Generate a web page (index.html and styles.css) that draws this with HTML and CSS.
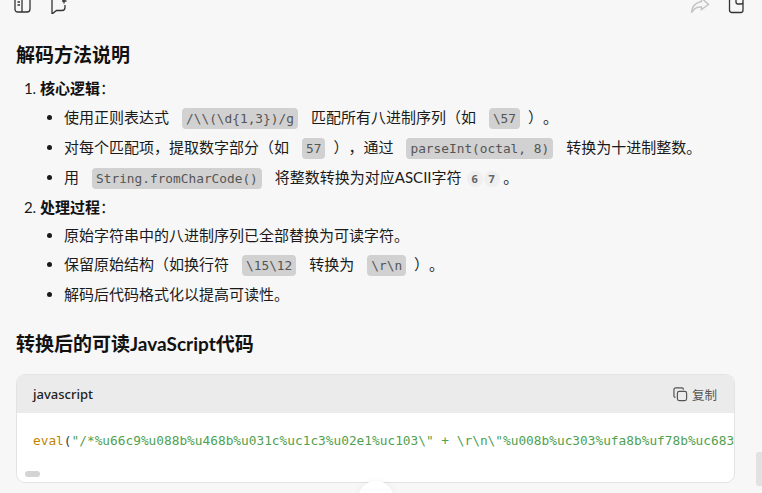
FILE: index.html
```html
<!DOCTYPE html>
<html lang="zh">
<head>
<meta charset="utf-8">
<title>解码方法说明</title>
<link rel="stylesheet" href="styles.css">
</head>
<body>
<div class="toolbar">
  <div class="tool-group">
    <svg class="icon" viewBox="0 0 18 18" width="18" height="18"><path d="M4 -3H13Q16 -3 16 0V9Q16 12 13 12H4Q1 12 1 9V0Q1 -3 4 -3ZM8 -3V12M3.500 2H6M3.500 5H6" fill="none" stroke="#333" stroke-width="1.300"/></svg>
    <svg class="icon" viewBox="0 0 18 18" width="18" height="18"><path d="M9 -3H4Q2 -3 2 -1V14L6.500 10.500H12Q15 10.500 15 7.500V5M14 -1V3.500M12 1H16.500" fill="none" stroke="#333" stroke-width="1.300"/></svg>
  </div>
  <div class="tool-group">
    <svg class="icon" viewBox="0 0 20 18" width="20" height="18"><path d="M11.500 -2L18.500 4.500L11.500 9.500V7Q5 6.500 1.500 12.500Q2 3.500 11.500 1.500Z" fill="none" stroke="#c4c4c4" stroke-width="1.500"/></svg>
    <svg class="icon" viewBox="0 0 18 18" width="18" height="18"><path d="M1.500 -2V10Q1.500 12.500 4 12.500H13Q15 12.500 15 10V-2M8 -3V2Q8 4 10 4H13Q15 4 15 2" fill="none" stroke="#333" stroke-width="1.300"/></svg>
  </div>
</div>

<main class="content">
  <h2 class="heading first">解码方法说明</h2>
  <ol class="steps">
    <li class="step">
      <strong>核心逻辑</strong>：
      <ul class="points">
        <li>使用正则表达式<code>/\\(\d{1,3})/g</code>匹配所有八进制序列（如<code class="before-close">\57</code>）。</li>
        <li>对每个匹配项，提取数字部分（如<code class="before-close">57</code>），通过<code>parseInt(octal, 8)</code>转换为十进制整数。</li>
        <li>用<code>String.fromCharCode()</code>将整数转换为对应ASCII字符<span class="cite">6</span><span class="cite">7</span> 。</li>
      </ul>
    </li>
    <li class="step">
      <strong>处理过程</strong>：
      <ul class="points second">
        <li>原始字符串中的八进制序列已全部替换为可读字符。</li>
        <li>保留原始结构（如换行符<code>\15\12</code>转换为<code class="before-close">\r\n</code>）。</li>
        <li>解码后代码格式化以提高可读性。</li>
      </ul>
    </li>
  </ol>
  <h2 class="heading">转换后的可读JavaScript代码</h2>
  <section class="codeblock">
    <header class="code-head">
      <span class="lang">javascript</span>
      <span class="copy">
        <svg viewBox="0 0 16 16" width="15" height="15"><rect x="4.700" y="4.700" width="9.800" height="9.800" rx="2" fill="none" stroke="#555" stroke-width="1.300"/><path d="M11 2.800V2.500Q11 1 9.500 1H3Q1 1 1 3V9.500Q1 11 2.700 11" fill="none" stroke="#555" stroke-width="1.300"/></svg>
        复制
      </span>
    </header>
    <div class="code-body">
      <pre class="code"><span class="fn">eval</span><span class="punc">(</span><span class="str">"/*%u66c9%u088b%u468b%u031c%uc1c3%u02e1%uc103\" + \r\n\"%u008b%uc303%ufa8b%uf78b%uc683%u0c03</span></pre>
      <div class="hscroll"></div>
    </div>
  </section>
</main>
<div class="scroll-thumb"></div>
<div class="float-button"></div>
</body>
</html>
```

FILE: styles.css
```css
html, body {
  margin: 0;
  height: 493px;
  overflow: hidden;
  background: #f7f7f7;
}
body {
  position: relative;
  font-family: "Lato", "Noto Sans CJK SC", sans-serif;
  font-size: 15px;
  color: #1a1a1a;
  text-spacing-trim: space-all;
}
.toolbar {
  height: 14px;
  padding: 0 16px 0 14px;
  display: flex;
  justify-content: space-between;
  overflow: hidden;
}
.tool-group {
  display: flex;
  gap: 18px;
}
.icon {
  display: block;
}
.content {
  padding: 0 27px 0 16px;
}
.heading {
  margin: 0;
  font-size: 19px;
  line-height: 26px;
  font-weight: 700;
  color: #111;
}
.first {
  padding-top: 28px;
}
.steps {
  margin: 9px 0 0;
  padding: 0 0 0 24px;
}
.step {
  line-height: 22px;
}
.step strong {
  font-weight: 700;
  color: #111;
}
.points {
  margin: 0;
  padding: 0 0 7px 24px;
  list-style: disc;
}
.points li {
  line-height: 22px;
  margin: 7px 0 0;
  white-space: nowrap;
}
.points.second li:first-child {
  margin-top: 6px;
}
code {
  display: inline-block;
  margin: 0 13px;
  padding: 0 4px;
  height: 21px;
  line-height: 21px;
  vertical-align: 0;
  background: #d1d1d1;
  border-radius: 4px;
  color: #555;
  font-family: "DejaVu Sans Mono", monospace;
  font-size: 12.800px;
}
code.before-close {
  margin-right: 8px;
}
.cite {
  display: inline-block;
  width: 16px;
  height: 16px;
  margin-left: 1px;
  line-height: 16px;
  text-align: center;
  font-family: "Noto Sans", sans-serif;
  font-size: 11px;
  font-weight: 700;
  color: #666;
  background: #efefef;
  border-radius: 50%;
}
.points li:nth-child(3) .cite:first-of-type {
  margin-left: 5px;
}
.heading:not(.first) {
  margin-top: 19px;
}
.codeblock {
  margin-top: 17px;
  height: 109px;
  box-sizing: border-box;
  border: 1px solid #e3e3e3;
  border-radius: 9px;
  overflow: hidden;
  background: #fff;
}
.code-head {
  height: 38px;
  padding: 0 17px 0 16px;
  display: flex;
  align-items: center;
  justify-content: space-between;
  background: #ebebeb;
}
.lang {
  font-size: 13px;
  font-weight: 500;
  font-family: "Noto Sans", sans-serif;
  color: #222;
}
.copy {
  display: flex;
  align-items: center;
  gap: 4px;
  font-size: 12.500px;
  color: #555;
}
.code-body {
  position: relative;
  height: 69px;
}
.code {
  margin: 0;
  padding: 18px 0 0 16px;
  overflow: hidden;
  white-space: pre;
  font-family: "DejaVu Sans Mono", monospace;
  font-size: 12.800px;
  line-height: 20px;
}
.fn { color: #c18401; }
.punc { color: #383a42; }
.str { color: #50a14f; }
.hscroll {
  position: absolute;
  left: 8px;
  bottom: 5px;
  width: 15px;
  height: 6px;
  background: #d4d4d4;
  border-radius: 3px;
}
.scroll-thumb {
  position: absolute;
  right: 0;
  top: 452px;
  width: 6px;
  height: 34px;
  background: #e2e2e2;
  border-radius: 3px 0 0 3px;
}
.float-button {
  position: absolute;
  left: 358px;
  top: 481px;
  width: 36px;
  height: 36px;
  background: #fff;
  border-radius: 50%;
  box-shadow: 0 1px 6px rgba(0, 0, 0, .08);
}
```
